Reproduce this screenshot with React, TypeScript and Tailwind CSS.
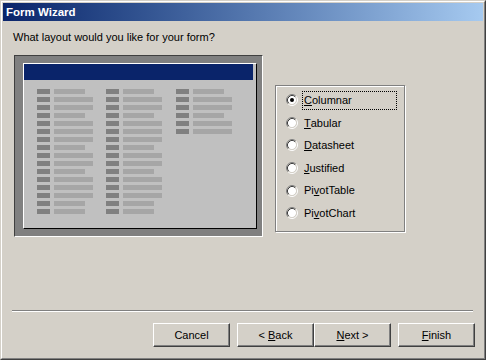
const FONT = { fontFamily: '"Liberation Sans", Arial, sans-serif' };

// S = short bar, L = long bar, one letter per row of the preview
const COL_A = "SLLSLLLSLLSLLLSS";
const COL_C = "SLLSLL";

const OPTIONS = [
  { pre: "", key: "C", post: "olumnar" },
  { pre: "", key: "T", post: "abular" },
  { pre: "", key: "D", post: "atasheet" },
  { pre: "", key: "J", post: "ustified" },
  { pre: "Pi", key: "v", post: "otTable" },
  { pre: "Pi", key: "v", post: "otChart" },
];

function PreviewColumn({ pattern, width }: { pattern: string; width: string }) {
  return (
    <div className={`flex flex-col gap-[3px] ${width}`}>
      {pattern.split("").map((p, i) => (
        <div key={i} className="flex items-center gap-[4px]">
          <div className="w-[13px] h-[5px] bg-[#808080]" />
          <div className={`h-[5px] bg-[#a6a6a6] ${p === "L" ? "w-[39px]" : "w-[31px]"}`} />
        </div>
      ))}
    </div>
  );
}

function Radio({ checked }: { checked?: boolean }) {
  return (
    <svg width="12" height="12" viewBox="0 0 12 12" className="shrink-0">
      <circle cx="6" cy="6" r="4.2" fill="#ffffff" />
      <path d="M2.11 9.89 A5.5 5.5 0 0 1 9.89 2.11" stroke="#808080" fill="none" />
      <path d="M9.89 2.11 A5.5 5.5 0 0 1 2.11 9.89" stroke="#ffffff" fill="none" />
      <path d="M2.82 9.18 A4.5 4.5 0 0 1 9.18 2.82" stroke="#404040" fill="none" />
      <path d="M9.18 2.82 A4.5 4.5 0 0 1 2.82 9.18" stroke="#d4d0c8" fill="none" />
      {checked && <circle cx="6" cy="6" r="2" fill="#000000" />}
    </svg>
  );
}

function WinButton({ children }: { children: React.ReactNode }) {
  return (
    <div className="w-[77px] h-[24px] flex items-center justify-center border border-t-white border-l-white border-b-[#404040] border-r-[#404040] shadow-[inset_-1px_-1px_0_#808080] text-[11px] text-black">
      {children}
    </div>
  );
}

export default function App() {
  return (
    <div
      style={FONT}
      className="w-[486px] h-[360px] border border-t-[#d4d0c8] border-l-[#d4d0c8] border-b-[#404040] border-r-[#404040]"
    >
      <div className="h-full flex flex-col bg-[#d4d0c8] p-px border border-t-white border-l-white border-b-[#808080] border-r-[#808080]">
        {/* Title bar */}
        <div className="h-[18px] shrink-0 flex items-center pl-[3px] bg-linear-to-r from-[#0a246a] to-[#a6caf0] text-white font-bold text-[11.5px] leading-[18px]">
          Form Wizard
        </div>

        <div className="mt-[10px] ml-[10px] text-[11px] leading-[13px] text-black">
          What layout would you like for your form?
        </div>

        <div className="flex items-start mt-[11px] ml-[11px]">
          {/* Layout preview */}
          <div className="w-[249px] h-[182px] pt-[7px] pl-[8px] pr-[5px] pb-[7px] bg-[#808080] border border-t-[#404040] border-l-[#404040] border-b-white border-r-white">
            <div className="h-full bg-[#c0c0c0] border border-t-white border-l-white border-b-black border-r-black">
              <div className="h-[16px] mr-[3px] bg-[#0a246a]" />
              <div className="flex pl-[13px] pt-[9px]">
                <PreviewColumn pattern={COL_A} width="w-[69px]" />
                <PreviewColumn pattern={COL_A} width="w-[70px]" />
                <PreviewColumn pattern={COL_C} width="w-[70px]" />
              </div>
            </div>
          </div>

          {/* Layout options */}
          <div className="ml-[12px] mt-[30px] w-[130px] h-[147px] pt-[3px] pl-[10px] border border-[#808080] shadow-[inset_1px_1px_0_#ffffff,1px_1px_0_#ffffff]">
            {OPTIONS.map((o, i) => (
              <div key={i} className="h-[22.6px] flex items-center gap-[4px]">
                <Radio checked={i === 0} />
                <div
                  className={`w-[95px] h-[19px] pl-[1px] flex items-center text-[11px] text-black border border-dotted ${
                    i === 0 ? "border-black" : "border-transparent"
                  }`}
                >
                  {o.pre}
                  <span className="underline">{o.key}</span>
                  {o.post}
                </div>
              </div>
            ))}
          </div>
        </div>

        {/* Footer */}
        <div className="mt-auto pb-[10px]">
          <div className="ml-[9px] mr-[10px] h-[2px] border-t border-t-[#808080] border-b border-b-white" />
          <div className="flex justify-end mt-[11px] mr-[8px]">
            <WinButton>Cancel</WinButton>
            <div className="ml-[7px] flex">
              <WinButton>
                &lt; <span className="underline ml-[3px]">B</span>ack
              </WinButton>
              <WinButton>
                <span className="underline">N</span>ext &gt;
              </WinButton>
            </div>
            <div className="ml-[7px]">
              <WinButton>
                <span className="underline">F</span>inish
              </WinButton>
            </div>
          </div>
        </div>
      </div>
    </div>
  );
}
